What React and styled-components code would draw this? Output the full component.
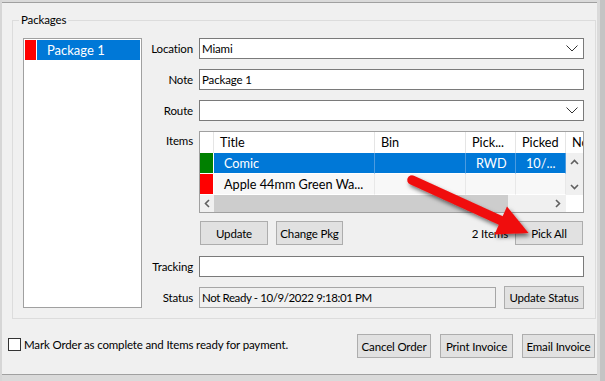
import React from "react";
import styled, { createGlobalStyle } from "styled-components";

const GlobalStyle = createGlobalStyle`
  html, body { margin: 0; padding: 0; background: #f0f0f0; }
  body { font-family: Lato, "Noto Sans", sans-serif; color: #000; }
  * { box-sizing: border-box; }
`;

const Screen = styled.div`
  position: relative;
  width: 605px;
  height: 381px;
  display: flex;
  flex-direction: column;
  background: #dadada;
  border-left: 2px solid #d6d6d6;
  border-right: 5px solid #c4c4c4;
  overflow: hidden;
`;

const Window = styled.div`
  height: 373px;
  margin: 2px 3px 0 0;
  background: #f0f0f0;
  border-top: 1px solid #a0a0a0;
  border-bottom: 1px solid #a0a0a0;
  display: flex;
  flex-direction: column;
  font-size: 11.5px;
  letter-spacing: -0.15px;
`;

const Group = styled.fieldset`
  margin: 9px 1px 0 10px;
  padding: 10px 11px 9px 10px;
  border: 1px solid #dcdcdc;
  min-width: 0;
  display: flex;
`;

const Legend = styled.legend`
  font-size: 11.5px;
  line-height: 16px;
  padding: 0 2px;
  margin-left: -4px;
`;

const PackageList = styled.div`
  width: 119px;
  height: 270px;
  flex: none;
  border: 1px solid #a0a0a0;
  background: #fff;
  padding: 1px;
`;

const PackageRow = styled.div`
  height: 20px;
  display: flex;
  gap: 1px;
`;

const Swatch = styled.div`
  width: 11px;
  flex: none;
  background: ${(p) => p.$color};
`;

const PackageName = styled.div`
  flex: 1;
  background: #0078d7;
  color: #fff;
  font-size: 13px;
  letter-spacing: 0;
  line-height: 20px;
  padding-left: 10px;
`;

const Form = styled.div`
  flex: 1;
  display: flex;
  flex-direction: column;
`;

const Row = styled.div`
  display: flex;
  align-items: ${(p) => (p.$top ? "flex-start" : "center")};
  margin-top: ${(p) => p.$mt || 0}px;
`;

const Label = styled.div`
  width: 51px;
  flex: none;
  margin-right: 6px;
  text-align: right;
  line-height: 16px;
  white-space: nowrap;
  padding-top: ${(p) => (p.$pt ? p.$pt : 0)}px;
`;

const Field = styled.div`
  flex: 1;
  height: 21px;
  border: 1px solid ${(p) => (p.$readonly ? "#a6a6a6" : "#7a7a7a")};
  background: ${(p) => (p.$readonly ? "#f0f0f0" : "#fff")};
  display: flex;
  align-items: center;
  padding: 0 2px;
  white-space: nowrap;
`;

const FieldText = styled.span`
  flex: 1;
  letter-spacing: ${(p) => (p.$tight ? "-0.4px" : "inherit")};
`;

const Chevron = () => (
  <svg width="12" height="7" viewBox="0 0 12 7" style={{ marginRight: 3 }}>
    <polyline points="0.5,0.5 6,6 11.5,0.5" fill="none" stroke="#333" strokeWidth="1" />
  </svg>
);

const ItemsBlock = styled.div`
  flex: 1;
  display: flex;
  flex-direction: column;
`;

const Grid = styled.div`
  height: 82px;
  border: 1px solid #a0a0a0;
  background: #fff;
  display: grid;
  grid-template-columns: 14px 161px 91px 50px 50px 17px;
  grid-template-rows: 21px 21px 21px 17px;
  overflow: hidden;
  font-size: 12.7px;
  letter-spacing: 0;
`;

const HeadCell = styled.div`
  line-height: 20px;
  padding-left: 6px;
  white-space: nowrap;
  overflow: hidden;
  border-right: ${(p) => (p.$last ? "none" : "1px solid #e5e5e5")};
  background: #fff;
`;

const Cell = styled.div`
  line-height: 20px;
  padding-left: 10px;
  white-space: nowrap;
  overflow: hidden;
  border-bottom: 1px solid #fff;
  border-right: 1px solid ${(p) => (p.$sel ? "#4b9be0" : "#e8e8e8")};
  background: ${(p) => (p.$sel ? "#0078d7" : "#f8f8f8")};
  color: ${(p) => (p.$sel ? "#fff" : "#000")};
`;

const Indicator = styled.div`
  background: ${(p) => p.$color};
  border-right: 1px solid #fff;
  border-bottom: 1px solid #fff;
`;

const VScroll = styled.div`
  grid-column: 6;
  grid-row: 2 / span 2;
  background: #f0f0f0;
  display: flex;
  flex-direction: column;
  justify-content: space-between;
  align-items: center;
  padding: 6px 0 5px;
`;

const HScroll = styled.div`
  grid-column: 1 / span 5;
  grid-row: 4;
  background: #f0f0f0;
  display: flex;
  align-items: stretch;
`;

const ScrollBtn = styled.div`
  width: ${(p) => p.$w}px;
  flex: none;
  display: flex;
  align-items: center;
  justify-content: center;
`;

const Thumb = styled.div`
  width: 294px;
  flex: none;
  background: #cdcdcd;
`;

const Track = styled.div`
  flex: 1;
`;

const Corner = styled.div`
  grid-column: 6;
  grid-row: 4;
  background: #fff;
`;

const Arrow = ({ dir }) => {
  const pts = {
    up: "1,5 4.5,1.5 8,5",
    down: "1,1 4.5,4.5 8,1",
    left: "5,1 1.5,4.5 5,8",
    right: "1,1 4.5,4.5 1,8",
  }[dir];
  const vertical = dir === "up" || dir === "down";
  return (
    <svg width={vertical ? 9 : 6} height={vertical ? 6 : 9} viewBox={vertical ? "0 0 9 6" : "0 0 6 9"}>
      <polyline points={pts} fill="none" stroke="#606060" strokeWidth="1.6" />
    </svg>
  );
};

const ButtonRow = styled.div`
  display: flex;
  align-items: center;
  margin-top: 8px;
  padding-left: 1px;
  padding-right: 1px;
`;

const Button = styled.button`
  height: ${(p) => p.$h || 24}px;
  width: ${(p) => p.$w}px;
  flex: none;
  border: 1px solid #adadad;
  background: #e1e1e1;
  font-family: inherit;
  font-size: inherit;
  letter-spacing: inherit;
  color: #000;
  padding: 0;
  white-space: nowrap;
  margin-left: ${(p) => p.$ml || 0}px;
`;

const Spacer = styled.div`
  flex: 1;
`;

const Count = styled.span`
  margin-right: 7px;
`;

const StatusRow = styled.div`
  flex: 1;
  display: flex;
  align-items: center;
  gap: 8px;
`;

const Bottom = styled.div`
  display: flex;
  align-items: center;
  margin-top: 15px;
  padding-left: 6px;
  padding-right: 2px;
`;

const Check = styled.div`
  width: 13px;
  height: 13px;
  border: 1px solid #333;
  background: #fff;
  margin-top: -3px;
`;

const CheckText = styled.span`
  margin-left: 3px;
  margin-top: -3px;
`;

const Overlay = styled.svg`
  position: absolute;
  left: -2px;
  top: 0;
  pointer-events: none;
`;

export default function App() {
  return (
    <>
      <GlobalStyle />
      <Screen>
        <Window>
          <Group>
            <Legend>Packages</Legend>
            <PackageList>
              <PackageRow>
                <Swatch $color="#ff0000" />
                <PackageName>Package 1</PackageName>
              </PackageRow>
            </PackageList>
            <Form>
              <Row>
                <Label>Location</Label>
                <Field>
                  <FieldText>Miami</FieldText>
                  <Chevron />
                </Field>
              </Row>
              <Row $mt={10}>
                <Label>Note</Label>
                <Field>
                  <FieldText>Package 1</FieldText>
                </Field>
              </Row>
              <Row $mt={10}>
                <Label>Route</Label>
                <Field>
                  <FieldText />
                  <Chevron />
                </Field>
              </Row>
              <Row $mt={10} $top>
                <Label $pt={2}>Items</Label>
                <ItemsBlock>
                  <Grid>
                    <HeadCell />
                    <HeadCell>Title</HeadCell>
                    <HeadCell>Bin</HeadCell>
                    <HeadCell>Pick...</HeadCell>
                    <HeadCell>Picked</HeadCell>
                    <HeadCell $last>Notes</HeadCell>
                    <Indicator $color="#008000" />
                    <Cell $sel>Comic</Cell>
                    <Cell $sel />
                    <Cell $sel>RWD</Cell>
                    <Cell $sel>10/...</Cell>
                    <VScroll>
                      <Arrow dir="up" />
                      <Arrow dir="down" />
                    </VScroll>
                    <Indicator $color="#ff0000" />
                    <Cell>Apple 44mm Green Wa...</Cell>
                    <Cell />
                    <Cell />
                    <Cell />
                    <HScroll>
                      <ScrollBtn $w={14}>
                        <Arrow dir="left" />
                      </ScrollBtn>
                      <Thumb />
                      <Track />
                      <ScrollBtn $w={17}>
                        <Arrow dir="right" />
                      </ScrollBtn>
                    </HScroll>
                    <Corner />
                  </Grid>
                  <ButtonRow>
                    <Button $w={68}>Update</Button>
                    <Button $w={67} $ml={8}>Change Pkg</Button>
                    <Spacer />
                    <Count>2 Items</Count>
                    <Button $w={68}>Pick All</Button>
                  </ButtonRow>
                </ItemsBlock>
              </Row>
              <Row $mt={11}>
                <Label>Tracking</Label>
                <Field />
              </Row>
              <Row $mt={9}>
                <Label>Status</Label>
                <StatusRow>
                  <Field $readonly>
                    <FieldText $tight>Not Ready - 10/9/2022 9:18:01 PM</FieldText>
                  </Field>
                  <Button $w={80} $h={23}>Update Status</Button>
                </StatusRow>
              </Row>
            </Form>
          </Group>
          <Bottom>
            <Check />
            <CheckText>Mark Order as complete and Items ready for payment.</CheckText>
            <Spacer />
            <Button $w={74}>Cancel Order</Button>
            <Button $w={73} $ml={9}>Print Invoice</Button>
            <Button $w={73} $ml={9}>Email Invoice</Button>
          </Bottom>
        </Window>
        <Overlay width="605" height="381" viewBox="0 0 605 381">
          <defs>
            <filter id="shadow" x="-20%" y="-20%" width="140%" height="140%">
              <feDropShadow dx="2" dy="3" stdDeviation="2" floodColor="#000" floodOpacity="0.55" />
            </filter>
          </defs>
          <g filter="url(#shadow)">
            <line x1="412" y1="180" x2="503" y2="221.5" stroke="#f00d0d" strokeWidth="9.5" strokeLinecap="round" />
            <polygon points="507,206.5 494.5,234.5 528.5,233" fill="#f00d0d" />
          </g>
        </Overlay>
      </Screen>
    </>
  );
}
